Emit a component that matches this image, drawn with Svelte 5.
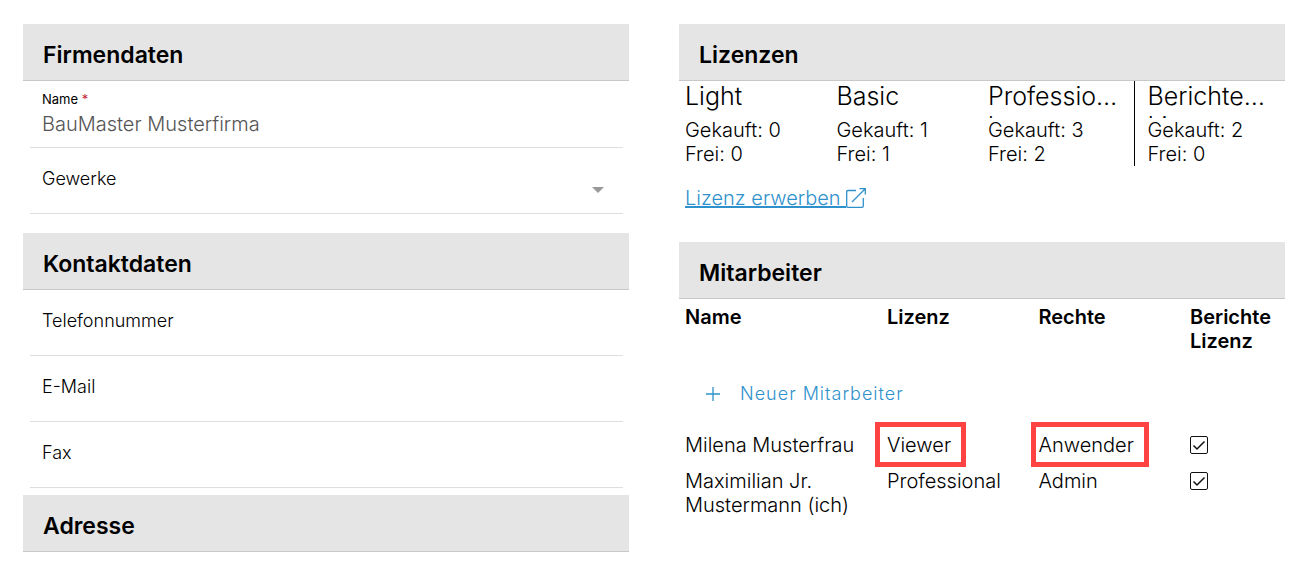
<script lang="ts">
	type License = { title: string; bought: number; free: number };
	type Employee = { name: string; license: string; role: string; reports: boolean; marked?: boolean };

	let companyName = $state('BauMaster Musterfirma');
	let trade = $state('');
	let contact = $state([
		{ id: 'phone', label: 'Telefonnummer', type: 'tel', value: '' },
		{ id: 'email', label: 'E-Mail', type: 'email', value: '' },
		{ id: 'fax', label: 'Fax', type: 'tel', value: '' }
	]);

	const licenses: License[] = [
		{ title: 'Light', bought: 0, free: 0 },
		{ title: 'Basic', bought: 1, free: 1 },
		{ title: 'Professional', bought: 3, free: 2 },
		{ title: 'Berichte Lizenz', bought: 2, free: 0 }
	];

	let employees: Employee[] = $state([
		{ name: 'Milena Musterfrau', license: 'Viewer', role: 'Anwender', reports: true, marked: true },
		{ name: 'Maximilian Jr. Mustermann (ich)', license: 'Professional', role: 'Admin', reports: true }
	]);
</script>

<main class="page">
	<div class="column">
		<section class="company">
			<h2>Firmendaten</h2>
			<div class="item filled">
				<label for="company">Name <span class="required">*</span></label>
				<input id="company" type="text" bind:value={companyName} required />
			</div>
			<div class="item select-item">
				<label for="trade">Gewerke</label>
				<select id="trade" bind:value={trade}>
					<option value=""></option>
				</select>
				<svg class="caret" viewBox="0 0 12 6" aria-hidden="true"><path d="M0 0h12L6 6z" fill="#999" /></svg>
			</div>
		</section>

		<section class="contact">
			<h2>Kontaktdaten</h2>
			{#each contact as field (field.id)}
				<div class="item">
					<label for={field.id}>{field.label}</label>
					<input id={field.id} type={field.type} bind:value={field.value} />
				</div>
			{/each}
		</section>

		<section>
			<h2>Adresse</h2>
		</section>
	</div>

	<div class="column">
		<section class="licenses">
			<h2>Lizenzen</h2>
			<div class="license-grid">
				{#each licenses as license}
					<div class="license">
						<h3>{license.title}</h3>
						<p>Gekauft: {license.bought}</p>
						<p>Frei: {license.free}</p>
					</div>
				{/each}
			</div>
			<a class="buy" href="#lizenz">
				<span>Lizenz erwerben&nbsp;</span>
				<svg viewBox="0 0 20 20" fill="none" stroke="currentColor" aria-hidden="true">
					<path d="M10 2.5H2Q.7 2.5 .7 3.8V18Q.7 19.3 2 19.3H16Q17.3 19.3 17.3 18V10M13.5 .7H19.3V6.5M19 1L6 14" stroke-width="1.3" />
				</svg>
			</a>
		</section>

		<section>
			<h2>Mitarbeiter</h2>
			<table>
				<thead>
					<tr>
						<th class="col-name">Name</th>
						<th class="col-mid">Lizenz</th>
						<th class="col-mid">Rechte</th>
						<th>Berichte Lizenz</th>
					</tr>
				</thead>
				<tbody>
					<tr>
						<td class="add-cell" colspan="4">
							<button type="button" class="add">
								<svg viewBox="0 0 14 14" aria-hidden="true"><path d="M7 0v14M0 7h14" stroke="currentColor" stroke-width="1.3" /></svg>
								Neuer Mitarbeiter
							</button>
						</td>
					</tr>
					{#each employees as employee}
						<tr>
							<td>{employee.name}</td>
							<td><span class:mark={employee.marked}>{employee.license}</span></td>
							<td><span class:mark={employee.marked} class:tight={employee.marked}>{employee.role}</span></td>
							<td class="check-cell">
								<input type="checkbox" bind:checked={employee.reports} aria-label="Berichte Lizenz {employee.name}" />
							</td>
						</tr>
					{/each}
				</tbody>
			</table>
		</section>
	</div>
</main>

<style>
	:global(body) { margin: 0; background: #fff; }

	.page {
		display: grid; grid-template-columns: 1fr 1fr; column-gap: 50px; align-items: start;
		padding: 24px 14px 0 23px;
		font-family: Inter, sans-serif; font-size: 20px; font-weight: 300; line-height: 24px; color: #000;
	}
	.column { min-width: 0; }

	h2 {
		margin: 0; padding: 17px 20px 11px;
		background: #e5e5e5; border-bottom: 1px solid #c8c8c8;
		font-size: 23px; font-weight: 600; line-height: 28px;
	}

	.company { margin-bottom: 19px; }
	.contact { margin-bottom: 7px; }

	.item {
		display: flex; flex-direction: column;
		margin: 0 6px 0 7px; padding: 20px 12px 0;
		border-bottom: 1px solid #dedede;
	}
	.item label { font-size: 18px; line-height: 22px; }
	.item input, .item select {
		width: 100%; height: 23px; padding: 0;
		border: none; outline: none; background: none; appearance: none;
		font: inherit; color: #555;
	}
	.item.filled { padding: 10px 12px 6px; }
	.item.filled label { font-size: 13px; line-height: 16px; font-weight: 400; }
	.item.filled input { height: 34px; }
	.required { color: #c5283d; }

	.item.select-item { flex-direction: row; padding-bottom: 20px; }
	.item.select-item select { flex: 1; height: 25px; }
	.caret { width: 12px; height: 6px; align-self: flex-end; margin: 0 7px 0 12px; }

	.license-grid { display: grid; grid-template-columns: repeat(4, minmax(0, 1fr)); }
	.license { padding: 0 6px; }
	.license:last-child { padding-left: 13px; border-left: 1px solid #000; }
	h3 {
		display: -webkit-box; -webkit-box-orient: vertical; -webkit-line-clamp: 1;
		height: 37px; margin: 0; overflow: hidden; word-break: break-word;
		font-size: 25px; font-weight: 300; line-height: 30px;
	}
	p { margin: 0; }

	.buy { display: inline-flex; align-items: center; margin: 20px 6px 32px; color: #2f91cc; text-decoration: none; }
	.buy span { text-decoration: underline; text-decoration-thickness: 2px; }
	.buy svg { width: 20px; height: 20px; }

	table { width: 100%; border-collapse: collapse; table-layout: fixed; }
	th, td { box-sizing: border-box; padding: 6px; text-align: left; vertical-align: top; }
	th { font-weight: 600; }
	.col-name { width: 33.333%; }
	.col-mid { width: 25%; }

	.add-cell { padding: 17px 6px 15px; }
	.add {
		display: flex; align-items: center; gap: 20px;
		height: 36px; padding: 0 21px; border: none; background: none;
		color: #2f91cc; font: inherit; font-size: 18px; letter-spacing: 1px; cursor: pointer;
	}
	.add svg { width: 14px; height: 14px; }

	.mark { position: relative; }
	/* red frame around the highlighted value */
	.mark::after {
		content: ''; position: absolute; inset: -11px -15px -10px -12px;
		border: 5px solid #ff4343; pointer-events: none;
	}
	.mark.tight::after { left: -7px; }

	.check-cell { padding-top: 9px; }
	.check-cell input {
		display: block; width: 18px; height: 18px; margin: 0;
		appearance: none; border: 1px solid #111; border-radius: 2px; background: #fff;
	}
	.check-cell input:checked {
		background: url("data:image/svg+xml,%3Csvg xmlns='http://www.w3.org/2000/svg' viewBox='0 0 16 16' fill='none' stroke='%23111' stroke-width='1.5'%3E%3Cpath d='M2.500 8.500l3.500 3.500L13.500 4.500'/%3E%3C/svg%3E") center / 16px 16px no-repeat;
	}
</style>
